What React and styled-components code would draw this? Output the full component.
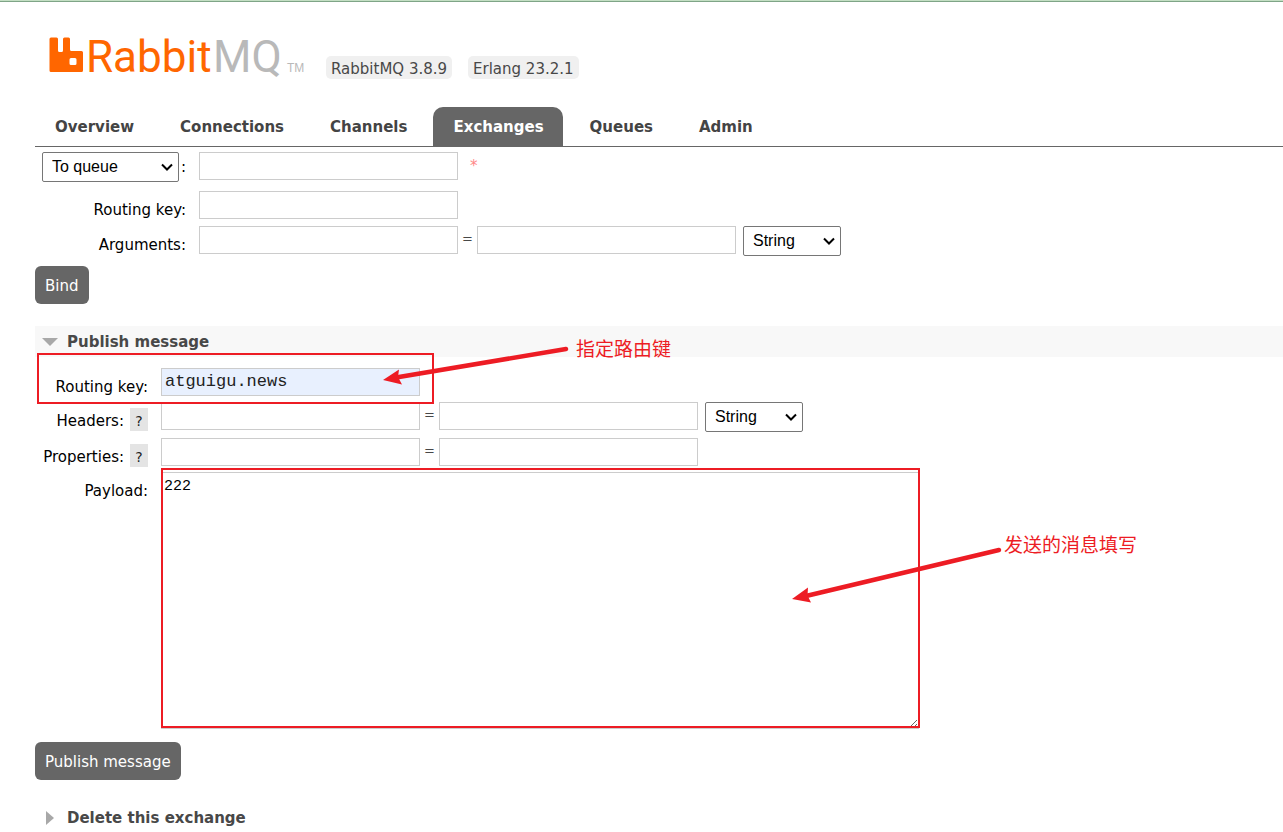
import { useState } from 'react';
import styled, { createGlobalStyle } from 'styled-components';

const colors = {
  brand: '#ff6600',
  brandGrey: '#b9b9b9',
  dark: '#666',
  text: '#484848',
  border: '#ccc',
  note: '#ed1c24',
};

const chevron = `url("data:image/svg+xml,%3Csvg xmlns='http://www.w3.org/2000/svg' width='12' height='8'%3E%3Cpath d='M1 1.500L6 6.500L11 1.500' fill='none' stroke='black' stroke-width='2'/%3E%3C/svg%3E")`;

const tabs = ['Overview', 'Connections', 'Channels', 'Exchanges', 'Queues', 'Admin'];

const Logo = () => (
  <LogoLink href="#/" aria-label="RabbitMQ">
    <svg width="258" height="44" viewBox="-1 1 258 44">
      <path
        fill={colors.brand}
        d="M1.5 4.5h5q1.500 0 1.500 1.500v11.500q0 1.500 1.500 1.500h2q1.500 0 1.500-1.500V6q0-1.500 1.500-1.500h4q1.500 0 1.500 1.500v10.500q0 1.500 1.500 1.500h10q1.500 0 1.500 1.500v18q0 1.500-1.500 1.500h-30.500q-1.500 0-1.500-1.500V6q0-1.500 1.500-1.500zM21 25q-1.500 0-1.500 1.500v4q0 1.500 1.500 1.500h4q1.500 0 1.500-1.500v-4q0-1.500-1.500-1.500z"
      />
      <LogoText x="36" y="39" fill={colors.brand}>
        Rabbit
      </LogoText>
      <LogoText x="163" y="39" fill={colors.brandGrey}>
        MQ
      </LogoText>
      <TradeMark x="237" y="39">
        TM
      </TradeMark>
    </svg>
  </LogoLink>
);

const TypeSelect = ({ label }) => (
  <Select aria-label={label} $width={98} defaultValue="string">
    <option value="string">String</option>
    <option value="number">Number</option>
    <option value="boolean">Boolean</option>
    <option value="list">List</option>
  </Select>
);

const BindForm = () => (
  <form onSubmit={(e) => e.preventDefault()}>
    <Fields $label={151} $gap={7}>
      <TallRow>
        <Destination>
          <Select aria-label="Destination type" $width={137} defaultValue="q">
            <option value="e">To exchange</option>
            <option value="q">To queue</option>
          </Select>
          <label htmlFor="destination">:</label>
        </Destination>
        <Controls>
          <Input id="destination" type="text" />
          <Mandatory>*</Mandatory>
        </Controls>
      </TallRow>
      <Row>
        <Label htmlFor="bind-key">Routing key:</Label>
        <Input id="bind-key" type="text" />
      </Row>
      <Row>
        <Label htmlFor="bind-arg">Arguments:</Label>
        <Controls>
          <Input id="bind-arg" type="text" />
          <Equals>=</Equals>
          <Input aria-label="Argument value" type="text" />
          <TypeSelect label="Argument type" />
        </Controls>
      </Row>
    </Fields>
    <Button type="submit">Bind</Button>
  </form>
);

const PublishForm = () => {
  const [key, setKey] = useState('atguigu.news');
  const [payload, setPayload] = useState('222');

  return (
    <form onSubmit={(e) => e.preventDefault()}>
      <Fields $label={113} $gap={6}>
        <Row>
          <Label htmlFor="publish-key">Routing key:</Label>
          <Input
            id="publish-key"
            type="text"
            $filled
            value={key}
            onChange={(e) => setKey(e.target.value)}
          />
        </Row>
        <Row>
          <LabelWithHelp>
            <label htmlFor="headers">Headers:</label>
            <Help type="button">?</Help>
          </LabelWithHelp>
          <Controls>
            <Input id="headers" type="text" />
            <Equals>=</Equals>
            <Input aria-label="Header value" type="text" />
            <TypeSelect label="Header type" />
          </Controls>
        </Row>
        <Row>
          <LabelWithHelp>
            <label htmlFor="properties">Properties:</label>
            <Help type="button">?</Help>
          </LabelWithHelp>
          <Controls>
            <Input id="properties" type="text" />
            <Equals>=</Equals>
            <Input aria-label="Property value" type="text" />
          </Controls>
        </Row>
        <Row>
          <Label htmlFor="payload">Payload:</Label>
          <Textarea
            id="payload"
            value={payload}
            onChange={(e) => setPayload(e.target.value)}
          />
        </Row>
      </Fields>
      <Button type="submit">Publish message</Button>
    </form>
  );
};

const Annotations = () => (
  <Notes width="1283" height="832" viewBox="0 0 1283 832">
    <g fill="none" stroke={colors.note} strokeWidth="2">
      <rect x="38" y="354" width="395" height="49" />
      <rect x="162" y="469" width="757" height="258" />
    </g>
    <g stroke={colors.note} strokeWidth="4.500" strokeLinecap="round">
      <path d="M566 349L396 377.500" />
      <path d="M999 550L806 596" />
    </g>
    <g fill={colors.note}>
      <path d="M383 380L399 369.500L398 377L402 384.500Z" />
      <path d="M792 599L808 587.500L807.500 595.500L811 602.500Z" />
      <NoteText x="576" y="356">
        指定路由键
      </NoteText>
      <NoteText x="1004" y="552">
        发送的消息填写
      </NoteText>
    </g>
  </Notes>
);

const App = () => {
  const [publishOpen, setPublishOpen] = useState(true);

  return (
    <Page>
      <GlobalStyle />
      <Header>
        <Logo />
        <Version>RabbitMQ 3.8.9</Version>
        <Version>Erlang 23.2.1</Version>
      </Header>
      <Nav>
        {tabs.map((tab) => (
          <Tab key={tab} href={`#/${tab.toLowerCase()}`} $active={tab === 'Exchanges'}>
            {tab}
          </Tab>
        ))}
      </Nav>
      <Main>
        <BindForm />
        <SectionTitle $open={publishOpen}>
          <button type="button" onClick={() => setPublishOpen(!publishOpen)}>
            <Arrow $open={publishOpen} />
            Publish message
          </button>
        </SectionTitle>
        {publishOpen && <PublishForm />}
        <SectionTitle>
          <button type="button">
            <Arrow />
            Delete this exchange
          </button>
        </SectionTitle>
      </Main>
      <Annotations />
    </Page>
  );
};

const GlobalStyle = createGlobalStyle`
  * {
    box-sizing: border-box;
  }
  body {
    margin: 0;
    background: #fff;
    color: ${colors.text};
    font: 15px/20px Verdana, 'DejaVu Sans', sans-serif;
    overflow: hidden;
  }
  label {
    color: #000;
  }
`;

const Page = styled.div`
  position: relative;
  border-top: 1px solid #c4dfc4;
`;

const Header = styled.header`
  display: flex;
  align-items: flex-end;
  gap: 16px;
  padding: 32px 0 0 49px;
  border-top: 1px solid #7fa587;
`;

const LogoLink = styled.a`
  height: 45px;
  margin-right: 3px;

  svg {
    overflow: visible;
  }
`;

const LogoText = styled.text`
  font: 44px Roboto, sans-serif;
`;

const TradeMark = styled.text`
  font: 12px 'Liberation Sans', sans-serif;
  fill: ${colors.brandGrey};
`;

const Version = styled.span`
  padding: 3px 5px 0;
  border-radius: 5px;
  background: #f0f0f0;
`;

const Nav = styled.nav`
  display: flex;
  gap: 7px;
  margin: 28px 0 0 35px;
  border-bottom: 1px solid ${colors.dark};
`;

const Tab = styled.a`
  padding: 10px 19px 9px 20px;
  border-radius: 10px 10px 0 0;
  background: ${(props) => (props.$active ? colors.dark : 'transparent')};
  color: ${(props) => (props.$active ? '#fff' : '#444')};
  font-weight: bold;
  text-decoration: none;
`;

const Main = styled.main`
  padding: 5px 0 0 35px;
`;

const Fields = styled.div`
  display: flex;
  flex-direction: column;
  gap: ${(props) => props.$gap}px;
  --label: ${(props) => props.$label}px;
`;

const Row = styled.div`
  display: grid;
  grid-template-columns: var(--label) 1fr;
  column-gap: 13px;
  align-items: start;
`;

const TallRow = styled(Row)`
  padding-bottom: 2px;
`;

const Label = styled.label`
  height: 28px;
  padding-top: 9px;
  text-align: right;
`;

const LabelWithHelp = styled.div`
  display: flex;
  justify-content: flex-end;
  align-items: flex-start;
  gap: 6px;
  height: 28px;
  padding-top: 6px;

  label {
    padding-top: 3px;
  }
`;

const Destination = styled.div`
  display: flex;
  justify-content: flex-end;
  align-items: center;
  gap: 2px;
`;

const Controls = styled.div`
  display: flex;
  align-items: flex-start;
`;

const Input = styled.input`
  width: 259px;
  height: 28px;
  padding: 2px 3px 4px;
  border: 1px solid ${colors.border};
  background: ${(props) => (props.$filled ? '#e8f0fe' : '#fff')};
  color: #222;
  font: 17px 'Liberation Mono', monospace;
`;

const Select = styled.select`
  appearance: none;
  width: ${(props) => props.$width}px;
  height: 30px;
  padding: 0 9px 2px;
  border: 1px solid #767676;
  border-radius: 2px;
  background: #fff ${chevron} no-repeat right 5px center;
  color: #000;
  font: 16px 'Liberation Sans', Arial, sans-serif;

  ${Controls} > & {
    margin-left: 7px;
  }
`;

const Mandatory = styled.span`
  padding: 4px 0 0 12px;
  color: #f88;
`;

const Equals = styled.span`
  width: 19px;
  padding-top: 3px;
  text-align: center;
  font-size: 13px;
`;

const Help = styled.button`
  width: 18px;
  height: 23px;
  padding: 2px 0 0;
  border: 0;
  background: #e4e4e4;
  color: #222;
  font: 14px Verdana, 'DejaVu Sans', sans-serif;
  cursor: pointer;
`;

const Textarea = styled.textarea`
  width: 758px;
  height: 257px;
  margin-bottom: 3px;
  padding: 3px 2px;
  border: 1px solid ${colors.border};
  color: #000;
  font: 15px/22px 'Liberation Mono', monospace;
`;

const Button = styled.button`
  height: 38px;
  margin-top: 10px;
  padding: 2px 10px 0;
  border: 0;
  border-radius: 6px;
  background: ${colors.dark};
  color: #fff;
  font: 15px Verdana, 'DejaVu Sans', sans-serif;
  cursor: pointer;
`;

const SectionTitle = styled.h2`
  margin: 22px 0 11px;
  background: ${(props) => (props.$open ? '#f8f8f8' : 'transparent')};
  font-size: 15px;

  button {
    display: flex;
    align-items: center;
    height: 31px;
    padding: 0 6px;
    border: 0;
    background: none;
    color: ${colors.text};
    font: bold 15px Verdana, 'DejaVu Sans', sans-serif;
    cursor: pointer;
  }
`;

const Arrow = styled.span`
  display: flex;
  justify-content: center;
  width: 18px;
  margin-right: 8px;

  &:before {
    content: '';
    border: 7px solid transparent;
    ${(props) =>
      props.$open
        ? 'border-width: 8px 8px 0; border-top-color: #a8a8a8;'
        : 'border-width: 7px 0 7px 8px; border-left-color: #a8a8a8;'}
  }
`;

const Notes = styled.svg`
  position: absolute;
  top: -1px;
  left: 0;
  pointer-events: none;
`;

const NoteText = styled.text`
  font: 19px 'Noto Sans CJK SC', sans-serif;
`;

export default App;
